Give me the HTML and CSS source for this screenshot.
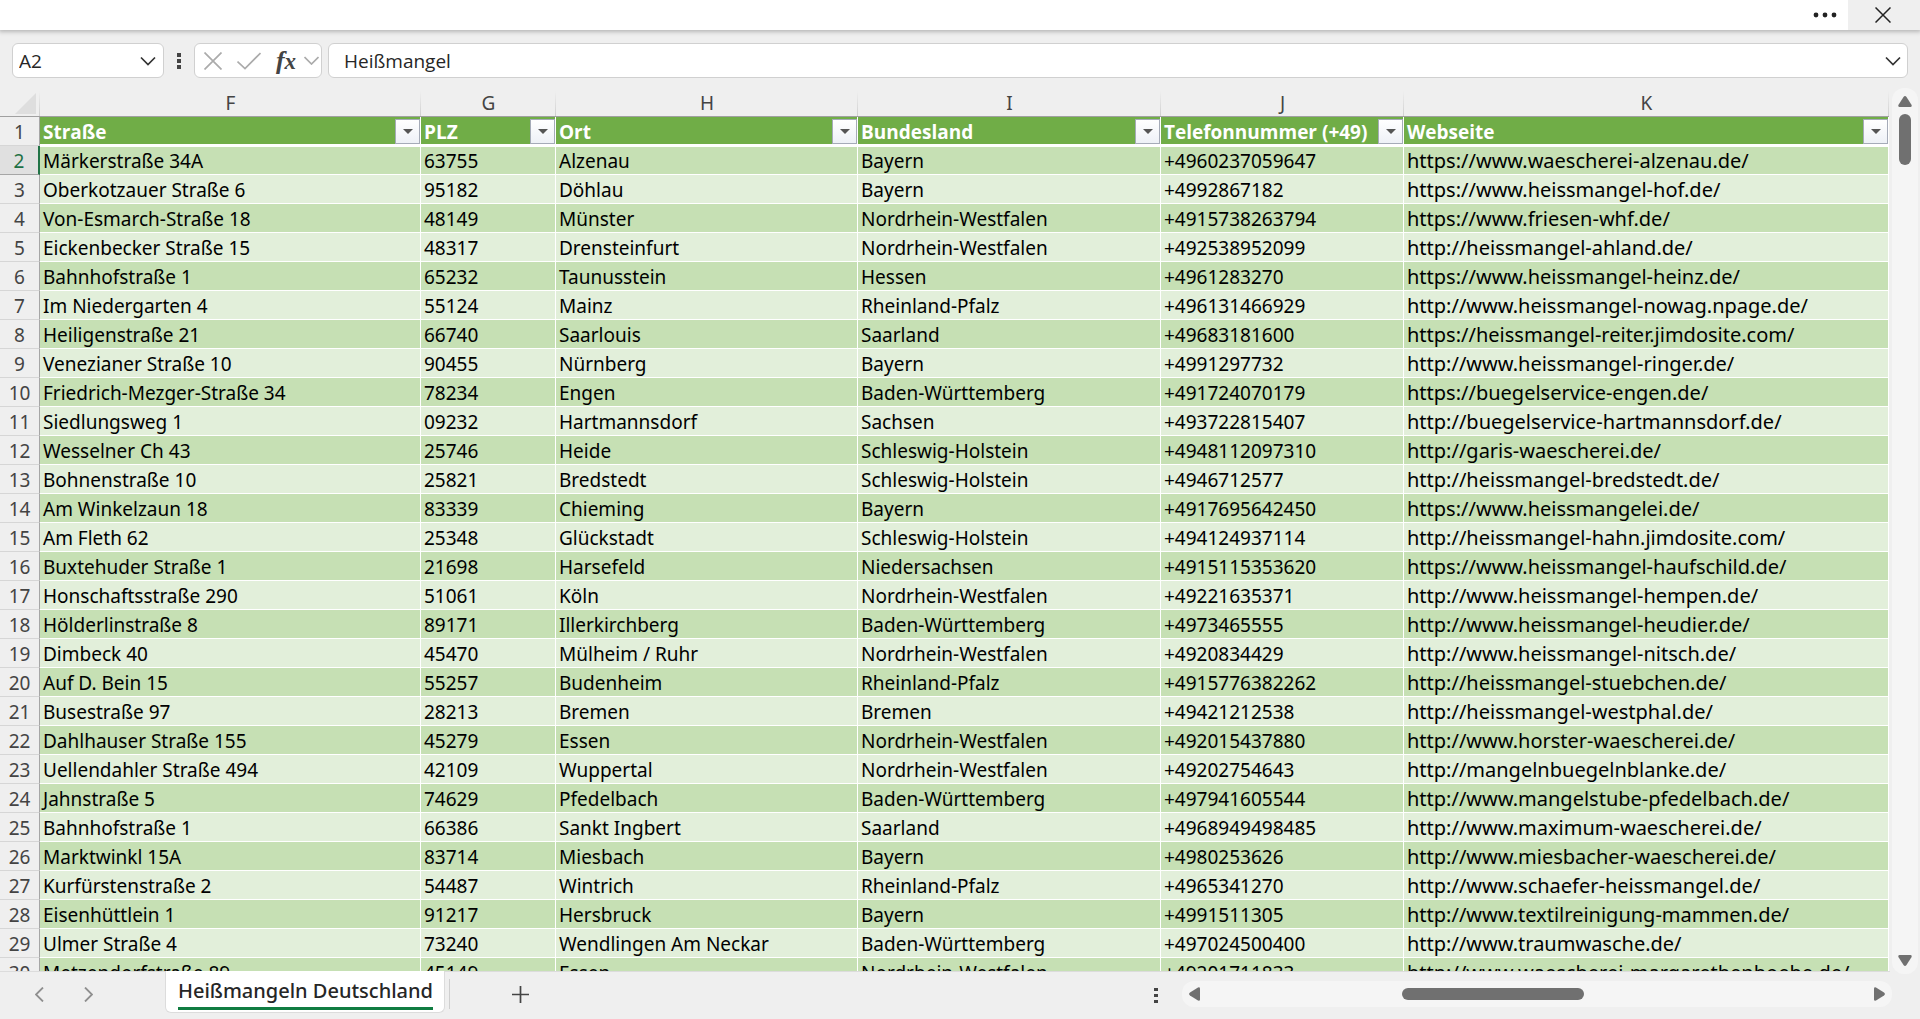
FILE: index.html
```
<!DOCTYPE html>
<html lang="de">
<head>
  <meta charset="UTF-8">
  <meta name="viewport" content="width=device-width, initial-scale=1.0">
  <title>Heißmangeln Deutschland</title>
  <link rel="stylesheet" href="styles.css">
</head>
<body>
  <header class="titlebar">
    <button class="title-btn more" aria-label="Mehr">
      <svg width="24" height="8" viewBox="0 0 24 8"><circle cx="3" cy="4" r="2.4"/><circle cx="12" cy="4" r="2.4"/><circle cx="21" cy="4" r="2.4"/></svg>
    </button>
    <button class="title-btn close" aria-label="Schließen">
      <svg width="16" height="16" viewBox="0 0 16 16"><path d="M0.5 0.5L15.5 15.5M15.5 0.5L0.5 15.5"/></svg>
    </button>
  </header>

  <div class="formula-bar">
    <div class="box name-box">
      <input type="text" value="A2" aria-label="Namenfeld">
      <button aria-label="Namen anzeigen"><svg width="16" height="10" viewBox="0 0 16 10"><path d="M1 1.5L8 8.5L15 1.5"/></svg></button>
    </div>
    <svg class="grip" width="4" height="16" viewBox="0 0 4 16"><path d="M0 0h4v4H0zM0 6h4v4H0zM0 12h4v4H0z"/></svg>
    <div class="box fx-box">
      <button class="pale" aria-label="Abbrechen"><svg width="18" height="18" viewBox="0 0 18 18"><path d="M0.5 0.5L17.5 17.5M17.5 0.5L0.5 17.5"/></svg></button>
      <button class="pale" aria-label="Eingeben"><svg width="24" height="18" viewBox="0 0 24 18"><path d="M0.5 9.5L8 16.5L23.5 1"/></svg></button>
      <button class="fx" aria-label="Funktion einfügen"><i>f</i><i class="x">x</i></button>
      <button class="pale" aria-label="Funktionen"><svg width="15" height="9" viewBox="0 0 15 9"><path d="M0.5 1L7.5 8L14.5 1"/></svg></button>
    </div>
    <div class="box formula">
      <input type="text" value="Heißmangel" aria-label="Bearbeitungsleiste">
      <button aria-label="Leiste erweitern"><svg width="16" height="10" viewBox="0 0 16 10"><path d="M1 1.5L8 8.5L15 1.5"/></svg></button>
    </div>
  </div>

  <main class="sheet">
    <div class="grid">
      <table>
        <colgroup>
          <col class="c-num"><col class="c-f"><col class="c-g"><col class="c-h"><col class="c-i"><col class="c-j"><col>
        </colgroup>
        <thead>
          <tr class="letters"><th class="corner"><svg width="21" height="21" viewBox="0 0 21 21"><path d="M21 0V21H0z"/></svg></th><th>F</th><th>G</th><th>H</th><th>I</th><th>J</th><th>K</th></tr>
          <tr class="titles">
            <th class="num">1</th>
            <th><div>Straße<button aria-label="Straße filtern"></button></div></th>
            <th><div>PLZ<button aria-label="PLZ filtern"></button></div></th>
            <th><div>Ort<button aria-label="Ort filtern"></button></div></th>
            <th><div>Bundesland<button aria-label="Bundesland filtern"></button></div></th>
            <th><div>Telefonnummer (+49)<button aria-label="Telefonnummer filtern"></button></div></th>
            <th><div>Webseite<button aria-label="Webseite filtern"></button></div></th>
          </tr>
        </thead>
        <tbody>
          <tr class="active"><th>2</th><td>Märkerstraße 34A</td><td>63755</td><td>Alzenau</td><td>Bayern</td><td>+4960237059647</td><td>https://www.waescherei-alzenau.de/</td></tr>
          <tr><th>3</th><td>Oberkotzauer Straße 6</td><td>95182</td><td>Döhlau</td><td>Bayern</td><td>+4992867182</td><td>https://www.heissmangel-hof.de/</td></tr>
          <tr><th>4</th><td>Von-Esmarch-Straße 18</td><td>48149</td><td>Münster</td><td>Nordrhein-Westfalen</td><td>+4915738263794</td><td>https://www.friesen-whf.de/</td></tr>
          <tr><th>5</th><td>Eickenbecker Straße 15</td><td>48317</td><td>Drensteinfurt</td><td>Nordrhein-Westfalen</td><td>+492538952099</td><td>http://heissmangel-ahland.de/</td></tr>
          <tr><th>6</th><td>Bahnhofstraße 1</td><td>65232</td><td>Taunusstein</td><td>Hessen</td><td>+4961283270</td><td>https://www.heissmangel-heinz.de/</td></tr>
          <tr><th>7</th><td>Im Niedergarten 4</td><td>55124</td><td>Mainz</td><td>Rheinland-Pfalz</td><td>+496131466929</td><td>http://www.heissmangel-nowag.npage.de/</td></tr>
          <tr><th>8</th><td>Heiligenstraße 21</td><td>66740</td><td>Saarlouis</td><td>Saarland</td><td>+49683181600</td><td>https://heissmangel-reiter.jimdosite.com/</td></tr>
          <tr><th>9</th><td>Venezianer Straße 10</td><td>90455</td><td>Nürnberg</td><td>Bayern</td><td>+4991297732</td><td>http://www.heissmangel-ringer.de/</td></tr>
          <tr><th>10</th><td>Friedrich-Mezger-Straße 34</td><td>78234</td><td>Engen</td><td>Baden-Württemberg</td><td>+491724070179</td><td>https://buegelservice-engen.de/</td></tr>
          <tr><th>11</th><td>Siedlungsweg 1</td><td>09232</td><td>Hartmannsdorf</td><td>Sachsen</td><td>+493722815407</td><td>http://buegelservice-hartmannsdorf.de/</td></tr>
          <tr><th>12</th><td>Wesselner Ch 43</td><td>25746</td><td>Heide</td><td>Schleswig-Holstein</td><td>+4948112097310</td><td>http://garis-waescherei.de/</td></tr>
          <tr><th>13</th><td>Bohnenstraße 10</td><td>25821</td><td>Bredstedt</td><td>Schleswig-Holstein</td><td>+4946712577</td><td>http://heissmangel-bredstedt.de/</td></tr>
          <tr><th>14</th><td>Am Winkelzaun 18</td><td>83339</td><td>Chieming</td><td>Bayern</td><td>+4917695642450</td><td>https://www.heissmangelei.de/</td></tr>
          <tr><th>15</th><td>Am Fleth 62</td><td>25348</td><td>Glückstadt</td><td>Schleswig-Holstein</td><td>+494124937114</td><td>http://heissmangel-hahn.jimdosite.com/</td></tr>
          <tr><th>16</th><td>Buxtehuder Straße 1</td><td>21698</td><td>Harsefeld</td><td>Niedersachsen</td><td>+4915115353620</td><td>https://www.heissmangel-haufschild.de/</td></tr>
          <tr><th>17</th><td>Honschaftsstraße 290</td><td>51061</td><td>Köln</td><td>Nordrhein-Westfalen</td><td>+49221635371</td><td>http://www.heissmangel-hempen.de/</td></tr>
          <tr><th>18</th><td>Hölderlinstraße 8</td><td>89171</td><td>Illerkirchberg</td><td>Baden-Württemberg</td><td>+4973465555</td><td>http://www.heissmangel-heudier.de/</td></tr>
          <tr><th>19</th><td>Dimbeck 40</td><td>45470</td><td>Mülheim / Ruhr</td><td>Nordrhein-Westfalen</td><td>+4920834429</td><td>http://www.heissmangel-nitsch.de/</td></tr>
          <tr><th>20</th><td>Auf D. Bein 15</td><td>55257</td><td>Budenheim</td><td>Rheinland-Pfalz</td><td>+4915776382262</td><td>http://heissmangel-stuebchen.de/</td></tr>
          <tr><th>21</th><td>Busestraße 97</td><td>28213</td><td>Bremen</td><td>Bremen</td><td>+49421212538</td><td>http://heissmangel-westphal.de/</td></tr>
          <tr><th>22</th><td>Dahlhauser Straße 155</td><td>45279</td><td>Essen</td><td>Nordrhein-Westfalen</td><td>+492015437880</td><td>http://www.horster-waescherei.de/</td></tr>
          <tr><th>23</th><td>Uellendahler Straße 494</td><td>42109</td><td>Wuppertal</td><td>Nordrhein-Westfalen</td><td>+49202754643</td><td>http://mangelnbuegelnblanke.de/</td></tr>
          <tr><th>24</th><td>Jahnstraße 5</td><td>74629</td><td>Pfedelbach</td><td>Baden-Württemberg</td><td>+497941605544</td><td>http://www.mangelstube-pfedelbach.de/</td></tr>
          <tr><th>25</th><td>Bahnhofstraße 1</td><td>66386</td><td>Sankt Ingbert</td><td>Saarland</td><td>+4968949498485</td><td>http://www.maximum-waescherei.de/</td></tr>
          <tr><th>26</th><td>Marktwinkl 15A</td><td>83714</td><td>Miesbach</td><td>Bayern</td><td>+4980253626</td><td>http://www.miesbacher-waescherei.de/</td></tr>
          <tr><th>27</th><td>Kurfürstenstraße 2</td><td>54487</td><td>Wintrich</td><td>Rheinland-Pfalz</td><td>+4965341270</td><td>http://www.schaefer-heissmangel.de/</td></tr>
          <tr><th>28</th><td>Eisenhüttlein 1</td><td>91217</td><td>Hersbruck</td><td>Bayern</td><td>+4991511305</td><td>http://www.textilreinigung-mammen.de/</td></tr>
          <tr><th>29</th><td>Ulmer Straße 4</td><td>73240</td><td>Wendlingen Am Neckar</td><td>Baden-Württemberg</td><td>+497024500400</td><td>http://www.traumwasche.de/</td></tr>
          <tr><th>30</th><td>Metzendorfstraße 89</td><td>45149</td><td>Essen</td><td>Nordrhein-Westfalen</td><td>+49201711833</td><td>http://www.waescherei-margarethenhoehe.de/</td></tr>
        </tbody>
      </table>
    </div>
    <div class="vscroll">
      <svg width="14" height="11" viewBox="0 0 14 11"><path d="M5.500 1Q7-.8 8.500 1L13.600 9Q14 11 12.500 11H1.500Q0 11 .4 9z"/></svg>
      <span class="thumb"></span>
      <svg class="down" width="14" height="11" viewBox="0 0 14 11"><path d="M5.500 10Q7 11.800 8.500 10L13.600 2Q14 0 12.500 0H1.500Q0 0 .4 2z"/></svg>
    </div>
  </main>

  <footer class="tabbar">
    <nav class="tab-nav">
      <button aria-label="Vorheriges Blatt"><svg width="9" height="15" viewBox="0 0 9 15"><path d="M8 .5L1 7.500L8 14.500"/></svg></button>
      <button aria-label="Nächstes Blatt"><svg width="9" height="15" viewBox="0 0 9 15"><path d="M1 .5L8 7.500L1 14.500"/></svg></button>
    </nav>
    <button class="tab"><span>Heißmangeln Deutschland</span></button>
    <button class="add" aria-label="Neues Blatt"><svg width="17" height="17" viewBox="0 0 17 17"><path d="M8.500 0V17M0 8.500H17"/></svg></button>
    <svg class="tab-grip" width="4" height="16" viewBox="0 0 4 16"><path d="M0 0h4v3H0zM0 6h4v3H0zM0 12h4v3H0z"/></svg>
    <div class="hscroll">
      <svg width="11" height="14" viewBox="0 0 11 14"><path d="M1 5.500Q-.8 7 1 8.500L9 13.600Q11 14 11 12.500V1.500Q11 0 9 .4z"/></svg>
      <div class="track"><span class="thumb"></span></div>
      <svg width="11" height="14" viewBox="0 0 11 14"><path d="M10 5.500Q11.800 7 10 8.500L2 13.600Q0 14 0 12.500V1.500Q0 0 2 .4z"/></svg>
    </div>
  </footer>
</body>
</html>
```
FILE: styles.css
```
* { box-sizing: border-box; }
body { margin: 0; height: 100vh; display: flex; flex-direction: column; overflow: hidden; background: #efefef; color: #000; font-family: "Open Sans", sans-serif; font-size: 19px; }
button { border: 0; padding: 0; background: none; font: inherit; color: inherit; display: flex; align-items: center; justify-content: center; }
input { border: 0; padding: 0; outline: 0; background: none; min-width: 0; flex: 1; font: inherit; color: #262626; }
svg { display: block; flex: none; }

/* title bar */
.titlebar { flex: none; height: 30px; display: flex; justify-content: flex-end; background: #fff; box-shadow: 0 1px 4px 1px #b8b8b8; }
.title-btn { height: 30px; }
.more { width: 46px; }
.more svg { fill: #222; }
.close { width: 72px; padding-right: 2px; background: #efefef; }
.close svg { fill: none; stroke: #222; stroke-width: 1.5; }

/* formula bar */
.formula-bar { flex: none; height: 61px; padding: 13px 12px 0; display: flex; align-items: flex-start; }
.box { height: 35px; display: flex; align-items: center; background: #fff; border: 1px solid #d0d0d0; border-radius: 6px; }
.box svg { fill: none; stroke: #333; stroke-width: 1.7; }
.name-box { width: 152px; padding: 0 7px 0 6px; }
.grip { margin: 10px 13px 0; fill: #444; }
.fx-box { width: 128px; padding-left: 9px; }
.fx-box .pale svg { stroke: #ababab; }
.fx-box .pale + .pale { margin-left: 15px; }
.fx { width: 22px; margin: 0 7px 0 14px; font: bold 26px "Liberation Serif", serif; color: #444; align-items: baseline; }
.fx .x { font-size: 23px; }
.formula { flex: 1; margin-left: 6px; padding: 0 6px 0 15px; }

/* grid */
.sheet { flex: 1; min-height: 0; display: flex; }
.grid { flex: 1; min-width: 0; overflow: hidden; }
table { width: 100%; table-layout: fixed; border-collapse: separate; border-spacing: 0; font-family: "Noto Sans", sans-serif; line-height: 24px; }
.c-num { width: 40px; }
.c-f { width: 381px; }
.c-g { width: 135px; }
.c-h { width: 302px; }
.c-i { width: 303px; }
.c-j { width: 243px; }
th, td { height: 29px; padding: 2px 0 0; white-space: nowrap; overflow: hidden; }
td { padding-left: 3px; border-right: 1px solid #fff; border-bottom: 1px solid #fff; background: #e2efda; }
td:last-child { font-size: 20px; }
tbody tr:nth-child(odd) td { background: #c6e0b4; }
tbody th, .num { font-weight: normal; color: #444; border-right: 1px solid #a6a6a6; border-bottom: 1px solid #d6d6d6; }
.letters th { height: 26px; padding: 0 0 1px; line-height: 22px; font-weight: normal; color: #444; border-bottom: 1px solid #a0a0a0; background: linear-gradient(#efefef, #cfcfcf) right / 1px 100% no-repeat; }
.corner svg { margin-left: 15px; fill: #dedede; }
.titles th:not(.num) { text-align: left; font-family: "Open Sans", sans-serif; color: #fff; background: #70ad47; padding: 0 0 0 3px; border-right: 1px solid #fff; border-bottom: 2px solid #fff; }
.titles div { height: 27px; padding-top: 2px; display: flex; align-items: center; justify-content: space-between; }
.titles button { width: 25px; height: 25px; border: 1px solid #a5abb8; background: linear-gradient(#fff, #eef1f7); }
.titles button::after { content: ""; border: 5px solid transparent; border-top-color: #555; border-bottom: 0; }
.active td { padding-top: 1px; border-top: 1px solid #fff; }
.active th { color: #1e7145; background: #e0e0e0; border-right: 2px solid #217346; border-bottom-color: #a6a6a6; }

/* scroll bars */
.thumb { display: block; background: #707070; border-radius: 6px; }
.vscroll { flex: none; width: 26px; margin: -3px 2px -3px 3px; padding: 8px 0; display: flex; flex-direction: column; align-items: center; background: #f5f5f5; border-radius: 12px; }
.vscroll svg, .hscroll svg { fill: #707070; }
.vscroll .thumb { width: 12px; height: 51px; margin-top: 7px; }
.down { margin-top: auto; }

/* sheet tabs */
.tabbar { flex: none; height: 48px; display: flex; align-items: flex-start; background: linear-gradient(#dcdcdc, #dcdcdc) top left / calc(100% - 30px) 1px no-repeat; }
.tab-nav { width: 165px; padding: 16px 0 0 35px; display: flex; gap: 40px; }
.tab-nav svg { fill: none; stroke: #8f8f8f; stroke-width: 1.8; }
.tab { height: 42px; padding: 2px 11px 0 12px; background: #fff; border: 1px solid #dcdcdc; border-top: 0; border-radius: 0 0 6px 6px; align-items: flex-start; }
.tab span { padding: 3px 0 1px; border-bottom: 3px solid #107c41; font: 500 20px/30px "Noto Sans", sans-serif; color: #262626; }
.add { height: 30px; margin: 8px 0 0 4px; padding-left: 62px; border-left: 1px solid #cfcfcf; }
.add svg { fill: none; stroke: #444; stroke-width: 1.7; }
.tab-grip { margin: 17px 24px 0 auto; fill: #444; }
.hscroll { width: 37%; height: 26px; margin: 10px 28px 0 0; padding: 0 7px; display: flex; align-items: center; background: #f5f5f5; border-radius: 12px; }
.track { flex: 1; }
.track .thumb { width: 27%; height: 12px; margin-left: 30%; }
```
